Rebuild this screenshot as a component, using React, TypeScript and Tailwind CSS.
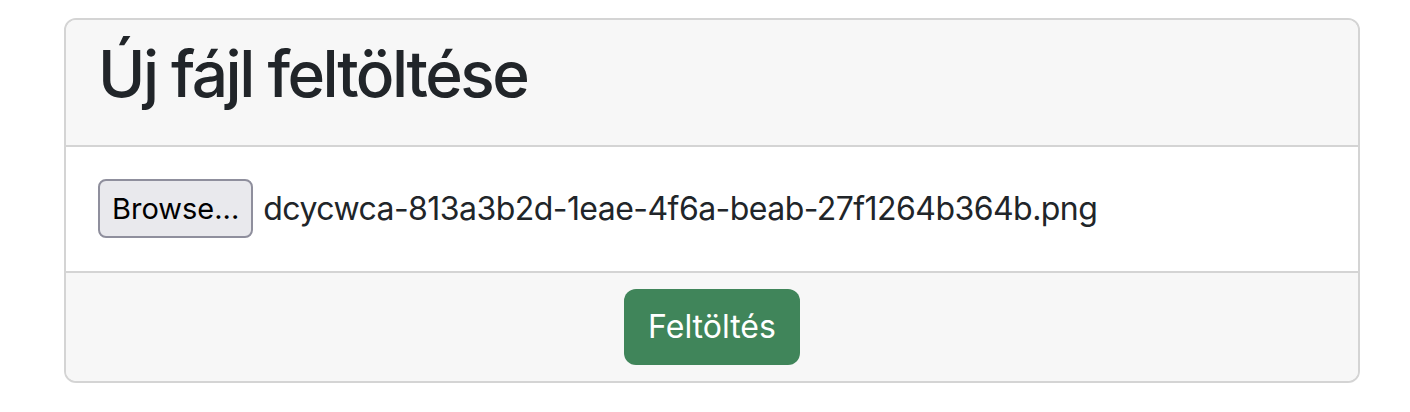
export default function App() {
  const fileName = 'dcycwca-813a3b2d-1eae-4f6a-beab-27f1264b364b.png'

  return (
    <div className="min-h-screen bg-white pt-[18px] pl-[64px] font-['Inter','Liberation_Sans',Arial,sans-serif] text-[#212529]">
      <div className="w-[1296px] overflow-hidden rounded-[12px] border-2 border-[#d4d4d4] bg-white">
        <header className="border-b-2 border-[#d4d4d4] bg-[#f7f7f7] px-[32px] pt-[16px] pb-[16px]">
          <h2 className="mb-[16px] text-[64px] leading-[1.2] font-medium tracking-[-2.5px]">
            Új fájl feltöltése
          </h2>
        </header>

        <main className="flex h-[124px] items-center px-[32px]">
          <button className="h-[59px] rounded-[8px] border-2 border-[#8f8f9d] bg-[#e9e9ed] px-[12px] text-[29px] text-black">
            Browse...
          </button>
          <span className="ml-[10px] text-[32px] tracking-[-0.55px]">{fileName}</span>
        </main>

        <footer className="flex justify-center border-t-2 border-[#d4d4d4] bg-[#f7f7f7] py-[16px]">
          <button className="h-[76px] rounded-[12px] bg-[#40855a] px-[24px] text-[32px] leading-[48px] text-white">
            Feltöltés
          </button>
        </footer>
      </div>
    </div>
  )
}
